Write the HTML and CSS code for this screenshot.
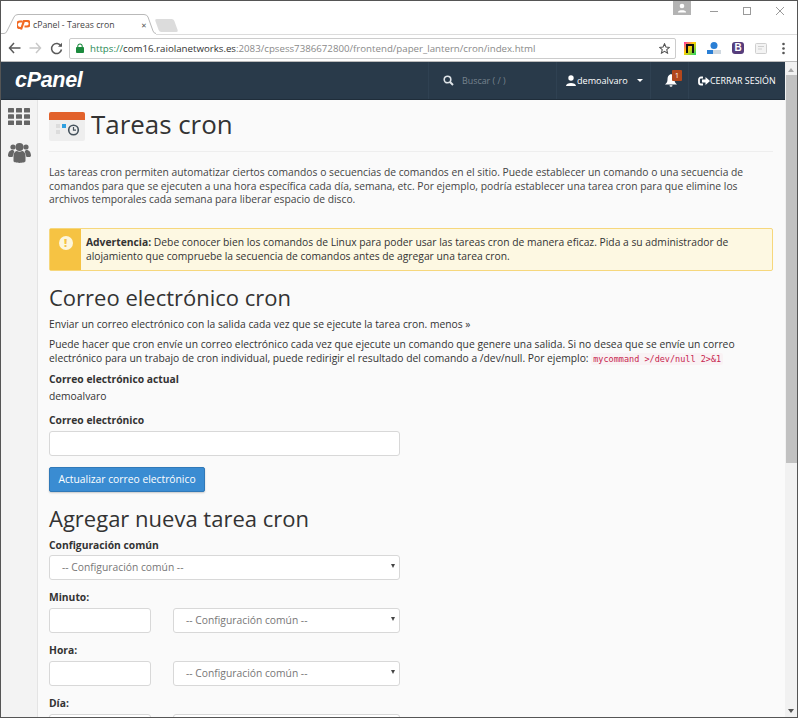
FILE: index.html
```html
<!DOCTYPE html>
<html lang="es">
<head>
<meta charset="utf-8">
<title>cPanel - Tareas cron</title>
<link rel="stylesheet" href="styles.css">
</head>
<body>
<div class="window">
  <div class="tabbar">
    <div class="tab">
      <svg class="tab-shape" width="155" height="21" viewBox="0 0 155 21"><path d="M0 19.500H3Q5 19.500 6 17L13 3Q14 .5 17 .5H143Q146 .5 147 3L152 17Q153 19.500 155 19.500V21H0z" fill="#fff" stroke="none"/><path d="M0 19.500H3Q5 19.500 6 17L13 3Q14 .5 17 .5H143Q146 .5 147 3L152 17Q153 19.500 155 19.500" fill="none" stroke="#b9b9b9"/></svg>
      <svg class="favicon" width="13" height="10" viewBox="0 0 13 10"><path d="M5.500 1.500H3A3 3 0 0 0 3 8H5M4 9.500 7 1H10A2.600 2.600 0 0 1 10 6.500H7.500" fill="none" stroke="#f26a23" stroke-width="2.200"/></svg>
      <span class="tab-title">cPanel - Tareas cron</span>
      <span class="tab-close">✕</span>
    </div>
    <div class="newtab"></div>
    <div class="winctl">
      <div class="profile"><svg width="18" height="14" viewBox="0 0 18 14"><circle cx="9" cy="5" r="2.300" fill="#fff"/><path d="M5 11c0-2.500 8-2.500 8 0v.5H5z" fill="#fff"/></svg></div>
      <svg class="ctl ctl-min" width="10" height="10" viewBox="0 0 10 10"><path d="M1 5.500H9" stroke="#9a9a9a"/></svg>
      <svg class="ctl ctl-max" width="10" height="10" viewBox="0 0 10 10"><rect x="1.500" y="1.500" width="7" height="7" fill="none" stroke="#9a9a9a"/></svg>
      <svg class="ctl ctl-x" width="10" height="10" viewBox="0 0 10 10"><path d="M1 1 9 9M9 1 1 9" stroke="#9a9a9a"/></svg>
    </div>
  </div>
  <div class="toolbar">
    <svg class="nav" width="13" height="12" viewBox="0 0 13 12"><path d="M6 1 1.500 6 6 11M2 6H12.500" fill="none" stroke="#5a5a5a" stroke-width="1.500"/></svg>
    <svg class="nav" width="13" height="12" viewBox="0 0 13 12"><path d="M7 1 11.500 6 7 11M11 6H.5" fill="none" stroke="#c8c8c8" stroke-width="1.500"/></svg>
    <svg class="nav nav-reload" width="13" height="13" viewBox="0 0 13 13"><path d="M11 4.200A5 5 0 1 0 11.500 7.500" fill="none" stroke="#5a5a5a" stroke-width="1.500"/><path d="M8 4.800H12V.8z" fill="#5a5a5a"/></svg>
    <div class="omnibox">
      <svg class="lock" width="8" height="10" viewBox="0 0 9 11"><path d="M2 5V3.500a2.500 2.500 0 0 1 5 0V5" fill="none" stroke="#1b8a3e" stroke-width="1.200"/><rect y="4.500" width="9" height="6.500" rx="1" fill="#1b8a3e"/></svg>
      <span class="url"><span class="url-https">https://</span><span class="url-host">com16.raiolanetworks.es</span><span class="url-rest">:2083/cpsess7386672800/frontend/paper_lantern/cron/index.html</span></span>
      <svg class="star" width="11" height="11" viewBox="0 0 13 13"><path d="M6.500 1 8.200 4.800 12.300 5.200 9.200 7.900 10.100 12 6.500 9.900 2.900 12 3.800 7.900 .7 5.200 4.800 4.800z" fill="none" stroke="#555" stroke-width="1.300"/></svg>
    </div>
    <div class="exts">
      <svg class="ext" width="12" height="13" viewBox="0 0 12 13"><defs><linearGradient id="rb" x1="0" y1="0" x2="1" y2="1"><stop offset="0" stop-color="#ff2bb0"/><stop offset=".45" stop-color="#ffd400"/><stop offset="1" stop-color="#18d36b"/></linearGradient></defs><rect width="12" height="13" fill="url(#rb)"/><path d="M3 11V3H9V11" fill="none" stroke="#111" stroke-width="2"/></svg>
      <svg class="ext" width="14" height="14" viewBox="0 0 14 14"><circle cx="7" cy="4.500" r="3.500" fill="#2a7fd5"/><rect y="9" width="14" height="4" fill="#cfd8e0"/><rect y="9" width="6" height="4" fill="#2a7fd5"/></svg>
      <span class="ext-b">B</span>
      <svg class="ext" width="12" height="11" viewBox="0 0 12 11"><rect x=".5" y=".5" width="11" height="10" rx="1" fill="#f3f3f3" stroke="#cfcfcf"/><path d="M3 3.500H9M3 6H7" stroke="#cfcfcf"/></svg>
      <svg class="ext ext-menu" width="3" height="13" viewBox="0 0 3 13"><circle cx="1.500" cy="2" r="1.300" fill="#555"/><circle cx="1.500" cy="6.500" r="1.300" fill="#555"/><circle cx="1.500" cy="11" r="1.300" fill="#555"/></svg>
    </div>
  </div>
  <div class="viewport">
    <div class="pagecol">
      <header class="cp-header">
        <span class="cp-logo">cPanel</span>
        <div class="cp-search">
          <svg width="11" height="11" viewBox="0 0 11 11"><circle cx="4.500" cy="4.500" r="3.300" fill="none" stroke="#dfe4e8" stroke-width="1.600"/><path d="M7 7 10 10" stroke="#dfe4e8" stroke-width="2"/></svg>
          <span>Buscar ( / )</span>
        </div>
        <div class="cp-user">
          <svg width="10" height="11" viewBox="0 0 10 11"><circle cx="5" cy="3" r="2.700" fill="#fff"/><path d="M0 11c0-4 10-4 10 0z" fill="#fff"/></svg>
          <span>demoalvaro</span><i class="caret"></i>
        </div>
        <div class="cp-bell">
          <svg width="12" height="13" viewBox="0 0 12 13"><path d="M6 0C3 1 2.500 3 2.500 5.500 2.500 8 1.500 9 0 10.500H12C10.500 9 9.500 8 9.500 5.500 9.500 3 9 1 6 0zM4.500 11.200a1.500 1.500 0 0 0 3 0z" fill="#fff"/></svg>
          <span class="badge">1</span>
        </div>
        <div class="cp-logout">
          <svg width="12" height="10" viewBox="0 0 12 10"><path d="M5 1.500H3A2 2 0 0 0 1 3.500V6.500A2 2 0 0 0 3 8.500H5" fill="none" stroke="#fff" stroke-width="1.800"/><path d="M4 3.500H7.500V1L12 5 7.500 9V6.500H4z" fill="#fff"/></svg>
          <span>CERRAR SESIÓN</span>
        </div>
      </header>
      <div class="body-row">
        <aside class="sidebar">
          <svg width="22" height="17" viewBox="0 0 22 17" fill="#666"><rect width="6" height="4.600" rx=".6"/><rect x="8" width="6" height="4.600" rx=".6"/><rect x="16" width="6" height="4.600" rx=".6"/><rect y="6.200" width="6" height="4.600" rx=".6"/><rect x="8" y="6.200" width="6" height="4.600" rx=".6"/><rect x="16" y="6.200" width="6" height="4.600" rx=".6"/><rect y="12.400" width="6" height="4.600" rx=".6"/><rect x="8" y="12.400" width="6" height="4.600" rx=".6"/><rect x="16" y="12.400" width="6" height="4.600" rx=".6"/></svg>
          <svg width="23" height="22" viewBox="0 0 23 22" fill="#666"><circle cx="5" cy="5" r="2.600"/><circle cx="18" cy="5" r="2.600"/><circle cx="11.500" cy="5" r="4"/><path d="M0 14c0-4 2-6 4.500-6 .7 0 1.300.7 1.800 1.300L4.500 15H1zM23 14c0-4-2-6-4.500-6-.7 0-1.300.7-1.800 1.300L18.500 15H22zM5.500 19V14c0-3.500 2-5 3.500-5 1.500 1 3.500 1 5 0 1.500 0 3.500 1.500 3.500 5V19c0 2.500-12 2.500-12 0z"/></svg>
        </aside>
        <main class="content">
          <div class="title-row">
            <svg class="cron-icon" width="36" height="29" viewBox="0 0 36 29"><rect width="36" height="29" rx="2" fill="#eeeeee"/><path d="M0 8V2Q0 0 2 0H34Q36 0 36 2V8z" fill="#e2622c"/><rect x="7" y="12" width="4" height="4" fill="#dcdcdc"/><rect x="13" y="12" width="4" height="4" fill="#2f9fe0"/><rect x="7" y="18" width="4" height="4" fill="#dcdcdc"/><circle cx="24.500" cy="18" r="4.800" fill="none" stroke="#45525c" stroke-width="1.600"/><path d="M24.500 15V18.200H27" fill="none" stroke="#45525c" stroke-width="1.200"/></svg>
            <h1>Tareas cron</h1>
          </div>
          <p class="intro">Las tareas cron permiten automatizar ciertos comandos o secuencias de comandos en el sitio. Puede establecer un comando o una secuencia de comandos para que se ejecuten a una hora específica cada día, semana, etc. Por ejemplo, podría establecer una tarea cron para que elimine los archivos temporales cada semana para liberar espacio de disco.</p>
          <div class="alert">
            <div class="alert-icon"><span>!</span></div>
            <p><strong>Advertencia:</strong> Debe conocer bien los comandos de Linux para poder usar las tareas cron de manera eficaz. Pida a su administrador de alojamiento que compruebe la secuencia de comandos antes de agregar una tarea cron.</p>
          </div>
          <h2>Correo electrónico cron</h2>
          <p class="lead">Enviar un correo electrónico con la salida cada vez que se ejecute la tarea cron. menos »</p>
          <p class="para">Puede hacer que cron envíe un correo electrónico cada vez que ejecute un comando que genere una salida. Si no desea que se envíe un correo electrónico para un trabajo de cron individual, puede redirigir el resultado del comando a /dev/null. Por ejemplo: <code>mycommand &gt;/dev/null 2&gt;&amp;1</code></p>
          <div class="label">Correo electrónico actual</div>
          <div class="value">demoalvaro</div>
          <div class="label">Correo electrónico</div>
          <div class="input wide"></div>
          <div class="btn">Actualizar correo electrónico</div>
          <h2 class="h2-second">Agregar nueva tarea cron</h2>
          <div class="label label-first">Configuración común</div>
          <div class="select wide"><span>-- Configuración común --</span><i></i></div>
          <div class="label">Minuto:</div>
          <div class="pair"><div class="input small"></div><div class="select medium"><span>-- Configuración común --</span><i></i></div></div>
          <div class="label">Hora:</div>
          <div class="pair"><div class="input small"></div><div class="select medium"><span>-- Configuración común --</span><i></i></div></div>
          <div class="label">Día:</div>
          <div class="pair"><div class="input small"></div><div class="select medium"><span>-- Configuración común --</span><i></i></div></div>
        </main>
      </div>
    </div>
    <div class="scrollbar">
      <i class="sb-up"></i>
      <div class="sb-thumb"></div>
      <i class="sb-down"></i>
    </div>
  </div>
</div>
</body>
</html>
```
FILE: styles.css
```css
* { box-sizing: border-box; }
html, body { margin: 0; height: 100%; overflow: hidden; background: #fff; }
body { font-family: "Open Sans", sans-serif; font-size: 10.300px; color: #333; }
.window { height: 718px; display: flex; flex-direction: column; border: 1px solid #555; overflow: hidden; }

.tabbar { height: 33px; background: #fff; display: flex; align-items: flex-end; flex: none; }
.tab { position: relative; z-index: 1; width: 155px; height: 21px; margin-bottom: -1px; display: flex; align-items: center; padding: 1px 0 0 16px; flex: none; }
.tab-shape { position: absolute; left: 0; top: 0; }
.favicon, .tab-title, .tab-close { position: relative; flex: none; }
.tab-title { margin-left: 3px; font-size: 8.700px; color: #444; white-space: nowrap; }
.tab-close { margin-left: 27px; font-size: 7px; color: #555; }
.newtab { width: 19px; height: 13px; margin: 0 0 2px 1px; background: #dcdcdc; border-radius: 2px; transform: skewX(20deg); }
.winctl { margin-left: auto; align-self: flex-start; display: flex; align-items: flex-start; padding-right: 12px; }
.profile { width: 18px; height: 14px; background: #b3b3b3; }
.ctl { margin-top: 5px; }
.ctl-min { margin-left: 18px; }
.ctl-max { margin-left: 23px; }
.ctl-x { margin-left: 23px; }

.toolbar { height: 28px; flex: none; background: #fff; border-top: 1px solid #dcdcdc; border-bottom: 1px solid #bbb; display: flex; align-items: center; padding-left: 7px; }
.nav { margin-right: 8px; flex: none; }
.nav-reload { margin-right: 6px; }
.omnibox { width: 607px; height: 21px; flex: none; border: 1px solid #ccc; border-radius: 2px; display: flex; align-items: center; padding: 0 5px 0 6px; }
.lock { flex: none; }
.url { margin-left: 6px; font-size: 9.700px; white-space: nowrap; flex: 1; overflow: hidden; }
.url-https { color: #2b8a57; }
.url-host { color: #333; }
.url-rest { color: #8a8a8a; }
.star { flex: none; }
.exts { display: flex; align-items: center; margin-left: 8px; gap: 11px; }
.ext { flex: none; }
.ext-menu { margin-left: 4px; }
.ext-b { width: 12px; height: 12px; background: #563d7c; color: #fff; border-radius: 3px; font: bold 10px/12px "Liberation Sans", sans-serif; text-align: center; }

.viewport { flex: 1; display: flex; min-height: 0; }
.pagecol { flex: 1; min-width: 0; display: flex; flex-direction: column; }
.scrollbar { width: 12px; flex: none; background: #f1f1f1; display: flex; flex-direction: column; align-items: center; padding: 6px 0 4px; }
.sb-up { width: 0; height: 0; border: 3px solid transparent; border-top: 0; border-bottom: 4px solid #a8a8a8; }
.sb-thumb { width: 11px; height: 388px; margin-top: 3px; background: #c1c1c1; }
.sb-down { margin-top: auto; width: 0; height: 0; border: 3px solid transparent; border-bottom: 0; border-top: 4px solid #555; }

.cp-header { height: 38px; flex: none; background: #293a4a; border-bottom: 1px solid #1f2d3a; display: flex; align-items: center; color: #fff; }
.cp-logo { margin-left: 14px; width: 413px; flex: none; font: italic bold 21.500px "Liberation Sans", sans-serif; letter-spacing: -.3px; }
.cp-search { width: 128px; flex: none; height: 100%; display: flex; align-items: center; gap: 8px; padding-left: 14px; color: #77838e; font-size: 8.900px; border-left: 1px solid #2f4152; }
.cp-user { width: 94px; flex: none; height: 100%; display: flex; align-items: center; gap: 1px; padding-left: 9px; font-size: 9.100px; border-left: 1px solid #2f4152; }
.caret { margin-left: 8px; border: 3px solid transparent; border-top: 3px solid #fff; border-bottom: 0; }
.cp-bell { position: relative; width: 38px; flex: none; height: 100%; display: flex; align-items: center; padding-left: 14px; border-left: 1px solid #2f4152; }
.badge { position: absolute; left: 21px; top: 8px; width: 10px; height: 11px; background: #b3471c; font-size: 7px; line-height: 11px; text-align: center; border-radius: 1px; }
.cp-logout { flex: 1; height: 100%; display: flex; align-items: center; gap: 0; padding-left: 9px; font-size: 8.900px; border-left: 1px solid #2f4152; white-space: nowrap; }

.body-row { flex: 1; min-height: 0; display: flex; }
.sidebar { width: 37px; flex: none; background: #f3f3f3; border-right: 1px solid #e4e4e4; box-shadow: 1px 0 3px rgba(0,0,0,.08); display: flex; flex-direction: column; align-items: center; padding-top: 8px; gap: 17px; }
.content { flex: 1; min-width: 0; background: #fafafa; padding: 0 12px 0 11px; overflow: hidden; }

.title-row { display: flex; align-items: flex-start; gap: 6px; height: 52px; padding-top: 6px; border-bottom: 1px solid #eee; }
.cron-icon { flex: none; margin-top: 6px; }
h1 { margin: 0; font-size: 25.900px; font-weight: 400; line-height: 36px; color: #333; }
.intro { margin: 14px 0 0; line-height: 13.600px; color: #444; }
.alert { display: flex; margin-top: 21px; height: 43px; border: 1px solid #f6d77c; border-radius: 2px; background: #fdf8e2; }
.alert-icon { width: 31px; flex: none; background: #f6c343; display: flex; justify-content: center; padding-top: 7px; }
.alert-icon span { width: 14px; height: 14px; border-radius: 50%; background: #fdf6dc; color: #f6c343; font-size: 11px; font-weight: 800; line-height: 14px; text-align: center; }
.alert p { margin: 0; padding: 6px 5px 0 5px; line-height: 14px; }
h2 { margin: 11px 0 0; font-size: 22px; font-weight: 400; line-height: 30px; color: #333; }
.lead { margin: 5px 0 0; line-height: 14px; }
.para { margin: 6px 0 0; line-height: 14px; }
code { font-family: "DejaVu Sans Mono", monospace; font-size: 8.500px; color: #c7254e; background: #f9f2f4; padding: 1px 2px; border-radius: 2px; }
.label { margin-top: 6px; font-weight: 700; line-height: 14px; color: #333; }
.value { margin-top: 3px; line-height: 14px; }
.value + .label { margin-top: 10px; }
.input, .select { height: 25px; background: #fff; border: 1px solid #d8d8d8; border-radius: 3px; }
.label + .input, .label + .pair { margin-top: 4px; }
.wide { width: 351px; }
.small { width: 102px; flex: none; }
.medium { width: 227px; flex: none; }
.pair { display: flex; gap: 22px; }
.pair + .label, .select + .label { margin-top: 10px; }
.select { display: flex; align-items: center; justify-content: space-between; padding: 0 4px 0 12px; color: #777; }
.select i { margin-top: -2px; border: 2.500px solid transparent; border-top: 4px solid #444; border-bottom: 0; }
.btn { display: block; width: 156px; margin-top: 11px; height: 25px; background: #3a8cd2; border: 1px solid #3079b8; border-radius: 2px; color: #fff; line-height: 23px; text-align: center; box-shadow: 0 1px 2px rgba(0,0,0,.2); white-space: nowrap; }
.h2-second { margin-top: 11px; }
.label-first { margin-top: 5px; }
.label-first + .select { margin-top: 3px; }
```
